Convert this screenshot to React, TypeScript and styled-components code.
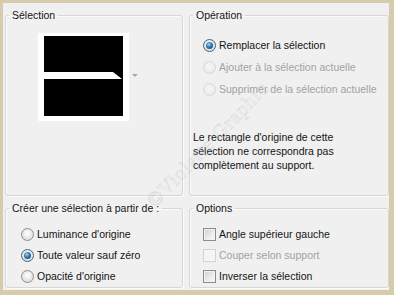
import React from "react";
import styled, { createGlobalStyle } from "styled-components";

const GlobalStyle = createGlobalStyle`
  body {
    margin: 0;
    background: #ffffff;
  }
`;

const operations = [
  { label: "Remplacer la sélection", checked: true, disabled: false },
  { label: "Ajouter à la sélection actuelle", checked: false, disabled: true },
  { label: "Supprimer de la sélection actuelle", checked: false, disabled: true },
];

const sources = [
  { label: "Luminance d'origine", checked: false },
  { label: "Toute valeur sauf zéro", checked: true },
  { label: "Opacité d'origine", checked: false },
];

const options = [
  { label: "Angle supérieur gauche", disabled: false },
  { label: "Couper selon support", disabled: true },
  { label: "Inverser la sélection", disabled: false },
];

export default function App() {
  return (
    <>
      <GlobalStyle />
      <Frame>
        <Group>
          <Legend>Sélection</Legend>
          <PreviewRow>
            <svg width="91" height="88" viewBox="0 0 91 88">
              <rect x="0" y="0" width="91" height="88" fill="#ffffff" />
              <rect x="6" y="3" width="79" height="80" fill="#000000" />
              <polygon points="6,39 75,39 84,46 6,46" fill="#ffffff" />
            </svg>
            <DropArrow />
          </PreviewRow>
        </Group>

        <Group>
          <Legend>Opération</Legend>
          <OptionList $top={12} $left={10} $row={22}>
            {operations.map((op) => (
              <OptionRow key={op.label}>
                <Radio $checked={op.checked} $disabled={op.disabled} />
                <Label $disabled={op.disabled}>{op.label}</Label>
              </OptionRow>
            ))}
          </OptionList>
          <Note>
            Le rectangle d'origine de cette
            <br />
            sélection ne correspondra pas
            <br />
            complètement au support.
          </Note>
        </Group>

        <Group>
          <Legend>Créer une sélection à partir de :</Legend>
          <OptionList $top={9} $left={12} $row={21}>
            {sources.map((src) => (
              <OptionRow key={src.label}>
                <Radio $checked={src.checked} />
                <Label>{src.label}</Label>
              </OptionRow>
            ))}
          </OptionList>
        </Group>

        <Group>
          <Legend>Options</Legend>
          <OptionList $top={9} $left={10} $row={21}>
            {options.map((opt) => (
              <OptionRow key={opt.label}>
                <Checkbox $disabled={opt.disabled} />
                <Label $disabled={opt.disabled}>{opt.label}</Label>
              </OptionRow>
            ))}
          </OptionList>
        </Group>

        <Watermark>©Violette Graphic</Watermark>
      </Frame>
    </>
  );
}

const Frame = styled.div`
  position: relative;
  overflow: hidden;
  box-sizing: border-box;
  width: 394px;
  height: 295px;
  border-style: solid;
  border-color: #d6ccab;
  border-width: 3px 5px 5px 3px;
  background: #f0f0f0;
  display: grid;
  grid-template-columns: 178px 200px;
  grid-template-rows: 187px 86px;
  column-gap: 6px;
  row-gap: 6px;
  padding: 6px 1px 0 2px;
  font-family: "Liberation Sans", Arial, sans-serif;
  font-size: 10.5px;
  color: #141414;
`;

const Group = styled.fieldset`
  box-sizing: border-box;
  margin: 0;
  min-width: 0;
  padding: 0 3px;
  border: 1px solid #d6d6d6;
  border-radius: 3px;
  box-shadow: inset 1px 1px 0 #fbfbfb, 1px 1px 0 #fbfbfb;
`;

const Legend = styled.legend`
  padding: 0 3px;
  line-height: 13px;
  height: 13px;
`;

const PreviewRow = styled.div`
  display: flex;
  align-items: center;
  gap: 3px;
  margin: 11px 0 0 29px;
`;

const DropArrow = styled.span`
  width: 0;
  height: 0;
  margin-top: -3px;
  border-left: 3px solid transparent;
  border-right: 3px solid transparent;
  border-top: 3px solid #a8a8a8;
`;

const OptionList = styled.div<{ $top: number; $left: number; $row: number }>`
  display: grid;
  grid-auto-rows: ${(p) => p.$row}px;
  margin-top: ${(p) => p.$top}px;
  padding-left: ${(p) => p.$left}px;
`;

const OptionRow = styled.div`
  display: flex;
  align-items: center;
  gap: 3px;
`;

const Label = styled.span<{ $disabled?: boolean }>`
  line-height: 13px;
  white-space: nowrap;
  color: ${(p) => (p.$disabled ? "#a2a2a2" : "#141414")};
`;

const Radio = styled.span<{ $checked?: boolean; $disabled?: boolean }>`
  position: relative;
  box-sizing: border-box;
  flex: none;
  width: 13px;
  height: 13px;
  border-radius: 50%;
  border: 1px solid
    ${(p) => (p.$disabled ? "#d8d8d8" : p.$checked ? "#3f6585" : "#8f8f8f")};
  background: ${(p) =>
    p.$disabled
      ? "radial-gradient(circle at 50% 40%, #f7f7f7, #e6e6e6)"
      : "radial-gradient(circle at 50% 40%, #ffffff, #d2d2d2)"};

  &::after {
    content: "";
    display: ${(p) => (p.$checked ? "block" : "none")};
    position: absolute;
    left: 2px;
    top: 2px;
    width: 7px;
    height: 7px;
    border-radius: 50%;
    background: radial-gradient(
      circle at 40% 35%,
      #a6d2f5 0,
      #2f77b5 45%,
      #0c3560 100%
    );
  }
`;

const Checkbox = styled.span<{ $disabled?: boolean }>`
  box-sizing: border-box;
  flex: none;
  width: 13px;
  height: 13px;
  border: 1px solid ${(p) => (p.$disabled ? "#d2d2d2" : "#8c8c8c")};
  box-shadow: inset 0 0 0 1px ${(p) => (p.$disabled ? "#f6f6f6" : "#f2f2f2")};
  background: ${(p) =>
    p.$disabled
      ? "#f4f4f4"
      : "linear-gradient(135deg, #d0d0d0 0%, #ececec 60%, #fbfbfb 100%)"};
`;

const Note = styled.p`
  margin: 30px 0 0;
  line-height: 14px;
`;

const Watermark = styled.div`
  position: absolute;
  left: 122px;
  top: 130px;
  font-family: "Liberation Serif", serif;
  font-size: 20px;
  letter-spacing: 1px;
  white-space: nowrap;
  color: rgba(255, 255, 255, 0.2);
  -webkit-text-stroke: 0.6px rgba(150, 150, 150, 0.25);
  transform: rotate(-46deg);
  pointer-events: none;
`;
